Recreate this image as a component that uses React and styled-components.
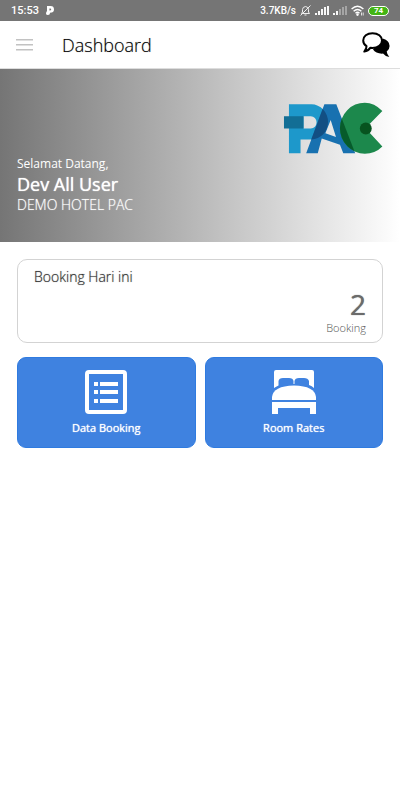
import React from 'react'
import styled, { createGlobalStyle } from 'styled-components'

const HomePage = () => {
  const bookingCount = 2

  return (
    <StyledPage>
      <GlobalStyle />
      <StyledStatusBar>
        <StyledStatusGroup $gap="7px">
          <span>15:53</span>
          <ParkingIcon />
        </StyledStatusGroup>
        <StyledStatusGroup $gap="4px">
          <StyledSpeed>3.7KB/s</StyledSpeed>
          <MutedBellIcon />
          <SignalIcon level={5} />
          <SignalIcon level={2} />
          <WifiIcon />
          <StyledBattery>74</StyledBattery>
        </StyledStatusGroup>
      </StyledStatusBar>

      <StyledHeader>
        <StyledIconButton type="button" aria-label="Menu">
          <MenuIcon />
        </StyledIconButton>
        <StyledHeaderTitle>Dashboard</StyledHeaderTitle>
        <StyledIconButton type="button" aria-label="Chat">
          <ChatIcon />
        </StyledIconButton>
      </StyledHeader>

      <StyledHero>
        <StyledWelcome>
          <StyledGreeting>Selamat Datang,</StyledGreeting>
          <StyledUserName>Dev All User</StyledUserName>
          <StyledHotel>DEMO HOTEL PAC</StyledHotel>
        </StyledWelcome>
        <PacLogo />
      </StyledHero>

      <StyledContent>
        <StyledCard>
          <StyledCardTitle>Booking Hari ini</StyledCardTitle>
          <StyledCount>{bookingCount}</StyledCount>
          <StyledCountLabel>Booking</StyledCountLabel>
        </StyledCard>
        <StyledTiles>
          <StyledTile type="button">
            <ListIcon />
            Data Booking
          </StyledTile>
          <StyledTile type="button">
            <BedIcon />
            Room Rates
          </StyledTile>
        </StyledTiles>
      </StyledContent>
    </StyledPage>
  )
}

const ParkingIcon = () => (
  <svg width="8" height="9" viewBox="0 0 8 9" aria-hidden="true">
    <path
      fill="#fff"
      fillRule="evenodd"
      d="M1 0H4.500Q8 0 8 3.400Q8 6.600 4 6.700V7Q4 9 2 9Q0 9 0 7.500Q0 6 1 5ZM3.400 2.600V4.400H4.200Q5.200 4.300 5.200 3.500Q5.200 2.600 4.200 2.600Z"
    />
  </svg>
)

const MutedBellIcon = () => (
  <svg width="11" height="11" viewBox="0 0 11 11" fill="none" stroke="#eee" aria-hidden="true">
    <path d="M1.500 8.500H9.500L8.500 7V4.500Q8.500 2 5.500 1.500Q2.500 2 2.500 4.500V7ZM4.500 10H6.500M0.500 10.500L10.500 0.500" />
  </svg>
)

const SignalIcon = ({ level }) => (
  <svg width="14" height="10" viewBox="0 0 14 10" fill="#fff" aria-hidden="true">
    {[2, 4, 6, 8, 9].map((height, i) => (
      <rect
        key={height}
        x={i * 3}
        y={9 - height}
        width="2"
        height={height}
        opacity={i < level ? 0.95 : 0.35}
      />
    ))}
  </svg>
)

const WifiIcon = () => (
  <svg width="13" height="11" viewBox="0 0 13 11" fill="none" stroke="#fff" strokeWidth="1.400" aria-hidden="true">
    <path d="M0.600 4Q6.500 -1.600 12.400 4M2.600 6.200Q6.500 2.600 10.400 6.200M4.500 8.200Q6.500 6.400 8.500 8.200" />
    <circle cx="6.500" cy="9.600" r="0.600" />
    <path d="M10.500 7.500V10.500M12.200 7.500V10.500" strokeWidth="0.800" />
  </svg>
)

const MenuIcon = () => (
  <svg width="18" height="13" viewBox="0 0 18 13" fill="#c2c2c2" aria-hidden="true">
    <rect y="1" width="17" height="1.500" />
    <rect y="6" width="17" height="1.500" />
    <rect y="11" width="17" height="1.500" />
  </svg>
)

const ChatIcon = () => (
  <svg width="28" height="26" viewBox="0 0 28 26" aria-hidden="true">
    <path d="M11 17.500L20.800 6.500Q27.600 8.500 27.600 14Q27.600 17.500 24.700 19.500Q25 22.500 27.300 25Q23.500 24.800 21 21.600Q14 22 11 17.500Z" />
    <path
      d="M10.500 1.200C16 1.200 20 4.300 20 8.500C20 12.800 16 15.900 10.500 15.900L8.500 15.700C7 17.800 5 19.200 2.300 19.600C4 17.500 4.600 16 4.500 14.200C2.500 12.900 1.200 11 1.200 8.500C1.200 4.300 5 1.200 10.500 1.200Z"
      fill="#fff"
      stroke="#000"
      strokeWidth="2"
      strokeLinejoin="round"
    />
  </svg>
)

const PacLogo = () => (
  <svg width="100" height="52" viewBox="39 34 300 157" role="img" aria-label="PAC">
    <defs>
      <clipPath id="letter-a">
        <path d="M163 41H199L256 189H108Z" />
      </clipPath>
      <clipPath id="letter-c">
        <circle cx="287" cy="113" r="77" />
      </clipPath>
    </defs>
    <path
      d="M56 41H124A50 53 0 0 1 124 147H91V189H56ZM100 77V114H122A17 18 0 0 0 122 77Z"
      fill="#1d98cb"
      fillRule="evenodd"
    />
    <rect x="41" y="77" width="59" height="37" fill="#126e95" />
    <path
      d="M163 41H199L256 189H220L210 163L155 144L143 189H108ZM182 88L166 128L198 140Z"
      fill="#1871b0"
      fillRule="evenodd"
    />
    <path
      d="M124 41A50 53 0 0 1 124 147H91V114H122A17 18 0 0 0 122 77V41Z"
      fill="#124f83"
      clipPath="url(#letter-a)"
    />
    <path
      d="M287 113L338 61Q314 36 285 36A75 77 0 0 0 285 190Q316 190 338 168Z"
      fill="#1c884c"
    />
    <path d="M199 41L256 189H220L176 75Z" fill="#075b2b" clipPath="url(#letter-c)" />
    <circle cx="288" cy="114" r="18" fill="#07531f" />
  </svg>
)

const ListIcon = () => (
  <svg width="42" height="44" viewBox="0 0 42 44" aria-hidden="true">
    <rect x="2" y="2" width="38" height="40" rx="2" fill="none" stroke="#fff" strokeWidth="4" />
    <path d="M9 12h4v4h-4ZM15 12h18v4h-18ZM9 20h4v4h-4ZM15 20h18v4h-18ZM9 29h4v4h-4ZM15 29h18v4h-18Z" fill="#fff" />
  </svg>
)

const BedIcon = () => (
  <svg width="44" height="44" viewBox="0 0 44 44" fill="#fff" aria-hidden="true">
    <path d="M4 0H40Q42 0 42 2V18Q40 16 37 15V11Q36 8 32 8H27Q23 8 22.500 11V14H21.500V11Q21 8 17 8H11Q7 8 6.500 11V15.500Q4 16.500 2 18V2Q2 0 4 0Z" />
    <path d="M0 30V27Q1 16 22 15.500Q43 16 44 27V30Z" />
    <path d="M0 32H44V44H38V38H6V44H0Z" />
  </svg>
)

const GlobalStyle = createGlobalStyle`
  body {
    margin: 0;
    background: #fff;
    font-family: 'Open Sans', sans-serif;
  }
`

const StyledPage = styled.div`
  width: 100%;
`

const StyledStatusBar = styled.div`
  display: flex;
  align-items: center;
  justify-content: space-between;
  height: 21px;
  padding: 0 11px;
  background: #757575;
  color: #fff;
  font-family: Roboto, sans-serif;
  font-size: 11px;
  font-weight: 500;
`

const StyledStatusGroup = styled.div`
  display: flex;
  align-items: center;
  gap: ${({ $gap }) => $gap};
`

const StyledSpeed = styled.span`
  font-size: 10px;
`

const StyledBattery = styled.span`
  box-sizing: border-box;
  width: 21px;
  height: 10px;
  border: 1px solid #fff;
  border-radius: 5px;
  background: #43b414;
  font-size: 8px;
  font-weight: 700;
  line-height: 8px;
  text-align: center;
`

const StyledHeader = styled.header`
  display: flex;
  align-items: center;
  box-sizing: border-box;
  height: 48px;
  padding: 0 10px 0 16px;
  border-bottom: 1px solid #ddd;
`

const StyledIconButton = styled.button`
  display: flex;
  padding: 0;
  border: none;
  background: none;
  cursor: pointer;
`

const StyledHeaderTitle = styled.h1`
  flex: 1;
  margin: 0 0 0 28px;
  color: #000;
  font-size: 18px;
  font-weight: 300;
  line-height: 24px;
  text-shadow: 0 0 1px rgba(0, 0, 0, 0.4);
`

const StyledHero = styled.section`
  display: flex;
  align-items: flex-start;
  justify-content: space-between;
  padding: 33px 17px 26px;
  background: linear-gradient(to right, #757575, #fff);
`

const StyledWelcome = styled.div`
  padding-top: 52px;
  color: #fff;
`

const StyledGreeting = styled.p`
  margin: 0;
  font-size: 12px;
  line-height: 20px;
`

const StyledUserName = styled.p`
  margin: 0;
  font-size: 18px;
  font-weight: 400;
  line-height: 20px;
  text-shadow: 0 0 1px #fff;
`

const StyledHotel = styled.p`
  margin: 0;
  font-size: 14px;
  font-weight: 300;
  line-height: 22px;
  text-shadow: 0 0 1px rgba(255, 255, 255, 0.7);
`

const StyledContent = styled.main`
  display: flex;
  flex-direction: column;
  gap: 14px;
  padding: 17px;
`

const StyledCard = styled.section`
  padding: 6px 16px;
  border: 1px solid #d3d3d3;
  border-radius: 10px;
`

const StyledCardTitle = styled.h2`
  margin: 0;
  color: #333;
  font-size: 14px;
  font-weight: 300;
  line-height: 22px;
  text-shadow: 0 0 1px rgba(0, 0, 0, 0.5);
`

const StyledCount = styled.p`
  margin: 0;
  color: #6b6b6b;
  font-size: 28px;
  font-weight: 500;
  line-height: 32px;
  text-align: right;
  text-shadow: 0 0 1px #6b6b6b;
`

const StyledCountLabel = styled.p`
  margin: 0;
  color: #555;
  font-size: 11px;
  font-weight: 300;
  line-height: 16px;
  text-align: right;
`

const StyledTiles = styled.div`
  display: grid;
  grid-template-columns: 1fr 1fr;
  gap: 9px;
`

const StyledTile = styled.button`
  display: flex;
  flex-direction: column;
  align-items: center;
  gap: 6px;
  padding: 12px 8px 11px;
  border: 1px solid #2f7be0;
  border-radius: 9px;
  background: #3f82e0;
  color: #fff;
  font-family: inherit;
  font-size: 11px;
  font-weight: 400;
  line-height: 16px;
  text-shadow: 0 0 1px #fff;
  cursor: pointer;
`

export default HomePage
